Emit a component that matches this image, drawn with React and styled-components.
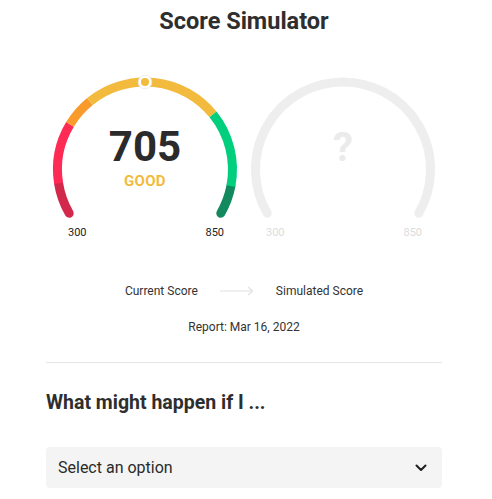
import React from "react";
import styled, { createGlobalStyle } from "styled-components";

const GlobalStyle = createGlobalStyle`
  html, body { margin: 0; padding: 0; background: #ffffff; }
  body { font-family: Roboto, "Liberation Sans", Arial, sans-serif; color: #2f2f2f; }
  * { box-sizing: border-box; }
`;

const Page = styled.div`
  width: 492px;
  padding: 7px 50px 0 46px;
  display: flex;
  flex-direction: column;
`;

const Title = styled.h1`
  margin: 0;
  font-size: 23.5px;
  line-height: 28px;
  font-weight: 700;
  text-align: center;
  color: #2e2e2e;
`;

const GaugeRow = styled.div`
  margin-top: 35px;
  display: grid;
  grid-template-columns: 198px 198px;
`;

const GaugeBox = styled.div`
  display: flex;
  flex-direction: column;
`;

const ArcStack = styled.div`
  display: grid;
  height: 156px;
  > * { grid-area: 1 / 1; }
`;

const Center = styled.div`
  display: flex;
  flex-direction: column;
  align-items: center;
  padding-top: ${(p) => p.$top}px;
`;

const ScoreValue = styled.div`
  font-size: 42px;
  line-height: 42px;
  font-weight: 700;
  color: #2b2b2b;
`;

const ScoreLabel = styled.div`
  margin-top: 5px;
  font-size: 15px;
  line-height: 17px;
  font-weight: 700;
  color: #f2bb3e;
  letter-spacing: 0.3px;
`;

const Unknown = styled.div`
  font-size: 40px;
  line-height: 40px;
  font-weight: 700;
  color: #ebebeb;
`;

const RangeLabels = styled.div`
  display: flex;
  justify-content: space-between;
  padding: 0 20px 0 22px;
  font-size: 11px;
  line-height: 13px;
  color: ${(p) => (p.$muted ? "#dcdcdc" : "#222222")};
`;

const Legend = styled.div`
  margin-top: 45px;
  display: flex;
  justify-content: center;
  align-items: center;
  gap: 22px;
  font-size: 12px;
  line-height: 14px;
  color: #333333;
`;

const Report = styled.div`
  margin-top: 22px;
  text-align: center;
  font-size: 12px;
  line-height: 14px;
  color: #333333;
`;

const Divider = styled.hr`
  margin: 28px 0 0;
  border: none;
  border-top: 1px solid #e6e6e6;
  height: 0;
`;

const Heading = styled.h2`
  margin: 28px 0 0;
  font-size: 19.5px;
  line-height: 24px;
  font-weight: 700;
  color: #2e2e2e;
`;

const Select = styled.div`
  margin-top: 32px;
  height: 41px;
  display: flex;
  align-items: center;
  justify-content: space-between;
  padding: 0 15px 0 12px;
  background: #f4f4f4;
  border-radius: 4px;
  font-size: 16px;
  color: #2a2a2a;
`;

const CX = 99;
const CY = 99.5;
const R = 87.5;

function polar(angle) {
  const rad = (angle * Math.PI) / 180;
  return [CX + R * Math.cos(rad), CY - R * Math.sin(rad)];
}

function arc(a, b) {
  const [x1, y1] = polar(210 - a);
  const [x2, y2] = polar(210 - b);
  const large = b - a > 180 ? 1 : 0;
  return `M ${x1.toFixed(2)} ${y1.toFixed(2)} A ${R} ${R} 0 ${large} 1 ${x2.toFixed(2)} ${y2.toFixed(2)}`;
}

const ends = [
  { a: 0, b: 21, c: "#d2284b" },
  { a: 221, b: 240, c: "#12895f" },
];
const middles = [
  { a: 21, b: 61, c: "#fe2c55" },
  { a: 61, b: 81, c: "#f89b2b" },
  { a: 81, b: 171, c: "#f2bb3e" },
  { a: 171, b: 221, c: "#02cf7d" },
];

function ColorArc() {
  return (
    <svg width="198" height="156" viewBox="0 0 198 156">
      {ends.map((s) => (
        <path key={s.a} d={arc(s.a, s.b)} stroke={s.c} strokeWidth="9" fill="none" strokeLinecap="round" />
      ))}
      {middles.map((s) => (
        <path key={s.a} d={arc(s.a, s.b)} stroke={s.c} strokeWidth="9" fill="none" />
      ))}
      <circle cx={CX} cy={CY - R} r="6.8" fill="#ffffff" stroke="#e9e9e9" strokeWidth="0.8" />
      <circle cx={CX} cy={CY - R} r="4" fill="#f2bb3e" />
    </svg>
  );
}

function GreyArc() {
  return (
    <svg width="198" height="156" viewBox="0 0 198 156">
      <path d={arc(0, 240)} stroke="#eeeeee" strokeWidth="9" fill="none" strokeLinecap="round" />
    </svg>
  );
}

function Arrow() {
  return (
    <svg width="34" height="10" viewBox="0 0 34 10">
      <path d="M0 5 H32.5 M28 1 L32.5 5 L28 9" stroke="#e2e2e2" strokeWidth="1.2" fill="none" />
    </svg>
  );
}

function Chevron() {
  return (
    <svg width="12" height="8" viewBox="0 0 12 8">
      <path d="M1.5 1.5 L6 6 L10.5 1.5" stroke="#1f1f1f" strokeWidth="2" fill="none" strokeLinecap="round" strokeLinejoin="round" />
    </svg>
  );
}

export default function App() {
  return (
    <>
      <GlobalStyle />
      <Page>
        <Title>Score Simulator</Title>
        <GaugeRow>
          <GaugeBox>
            <ArcStack>
              <ColorArc />
              <Center $top={55.5}>
                <ScoreValue>705</ScoreValue>
                <ScoreLabel>GOOD</ScoreLabel>
              </Center>
            </ArcStack>
            <RangeLabels>
              <span>300</span>
              <span>850</span>
            </RangeLabels>
          </GaugeBox>
          <GaugeBox>
            <ArcStack>
              <GreyArc />
              <Center $top={57.5}>
                <Unknown>?</Unknown>
              </Center>
            </ArcStack>
            <RangeLabels $muted>
              <span>300</span>
              <span>850</span>
            </RangeLabels>
          </GaugeBox>
        </GaugeRow>
        <Legend>
          <span>Current Score</span>
          <Arrow />
          <span>Simulated Score</span>
        </Legend>
        <Report>Report: Mar 16, 2022</Report>
        <Divider />
        <Heading>What might happen if I ...</Heading>
        <Select>
          <span>Select an option</span>
          <Chevron />
        </Select>
      </Page>
    </>
  );
}
